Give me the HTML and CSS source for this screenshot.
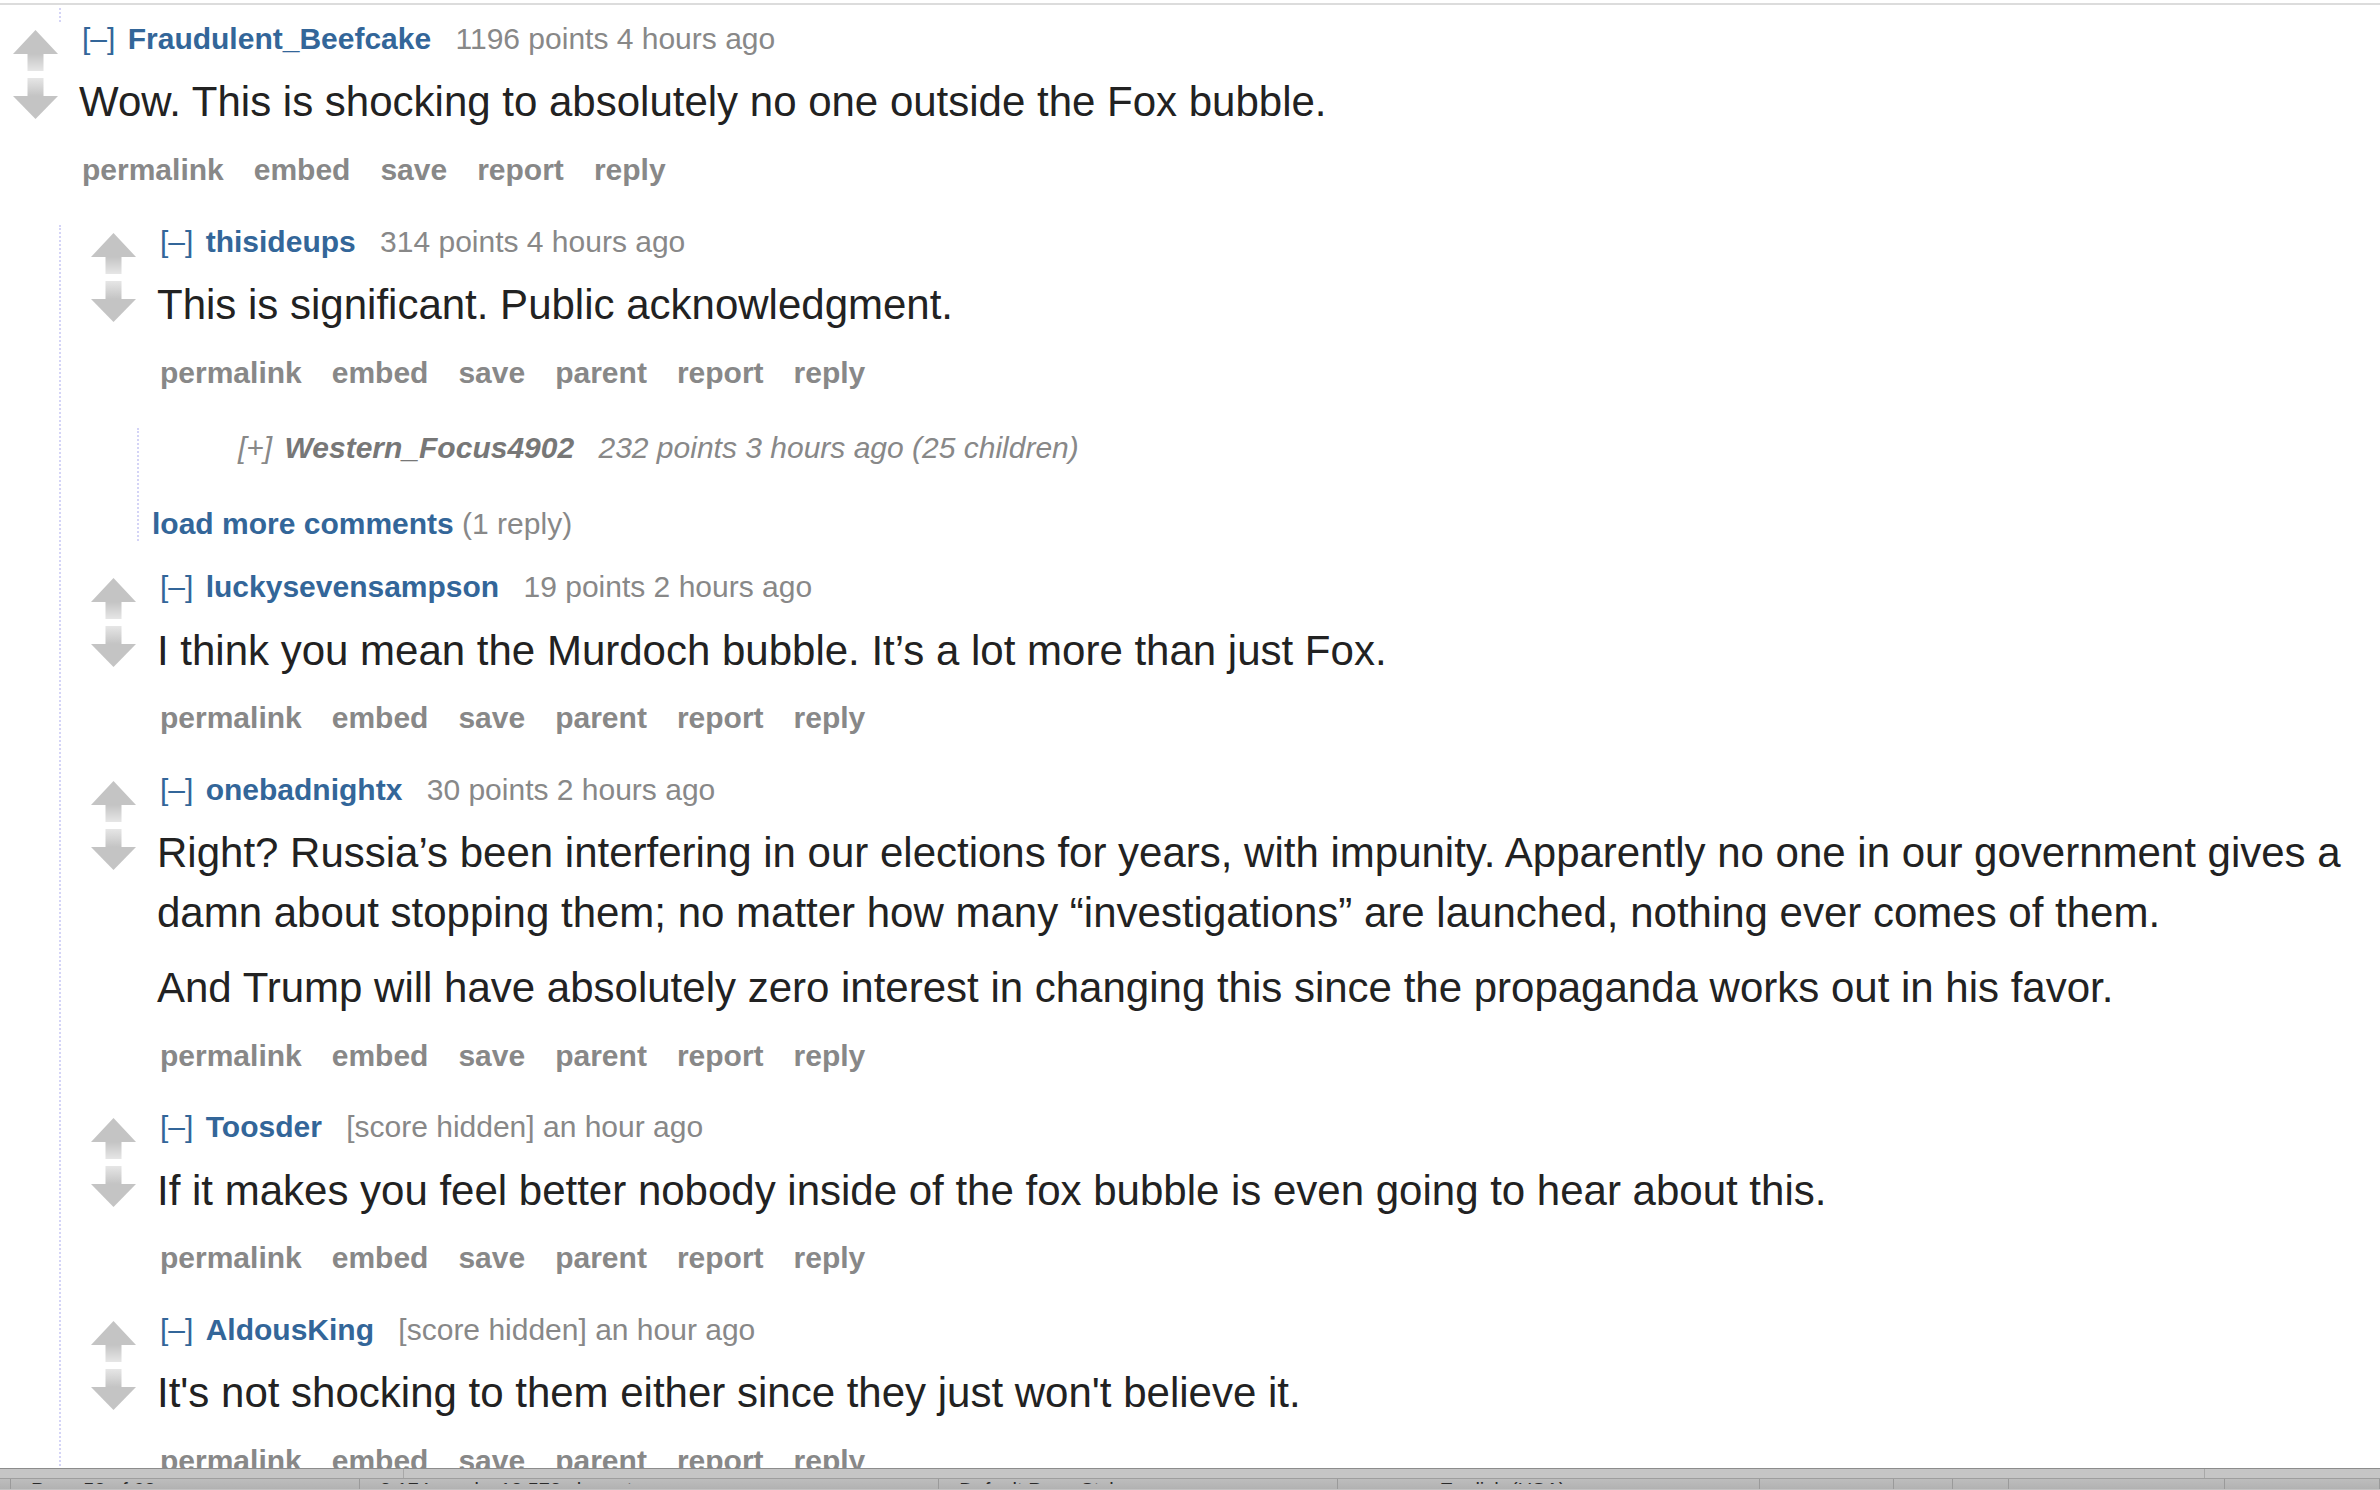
FILE: index.html
```html
<!DOCTYPE html>
<html lang="en">
<head>
<meta charset="utf-8">
<title>comments</title>
<link rel="stylesheet" href="styles.css">
</head>
<body>
<svg class="defs" width="0" height="0" aria-hidden="true">
  <defs>
    <linearGradient id="gup" x1="0" y1="0" x2="0" y2="1">
      <stop offset="0" stop-color="#c4c4c4"/>
      <stop offset="1" stop-color="#e6e6e6"/>
    </linearGradient>
    <linearGradient id="gdown" x1="0" y1="0" x2="0" y2="1">
      <stop offset="0" stop-color="#e6e6e6"/>
      <stop offset="1" stop-color="#c4c4c4"/>
    </linearGradient>
    <symbol id="up" viewBox="0 0 45 41">
      <polygon points="22.5,0 45,24 0,24" fill="#c4c4c4"/>
      <rect x="14.5" y="24" width="16" height="17" fill="url(#gup)"/>
    </symbol>
    <symbol id="down" viewBox="0 0 45 41">
      <rect x="14.5" y="0" width="16" height="18" fill="url(#gdown)"/>
      <polygon points="0,18 45,18 22.5,41" fill="#c4c4c4"/>
    </symbol>
  </defs>
</svg>

<div class="rule"></div>
<div class="prev-thread"></div>

<div class="comment">
  <div class="row">
    <div class="midcol"><svg class="arrow"><use href="#up"/></svg><svg class="arrow"><use href="#down"/></svg></div>
    <div class="entry">
      <p class="tagline"><a class="expand">[–]</a> <a class="author">Fraudulent_Beefcake</a> <span class="score">1196 points 4 hours ago</span></p>
      <div class="md"><p>Wow. This is shocking to absolutely no one outside the Fox bubble.</p></div>
      <ul class="buttons"><li>permalink</li><li>embed</li><li>save</li><li>report</li><li>reply</li></ul>
    </div>
  </div>

  <div class="child">
    <div class="comment">
      <div class="row">
        <div class="midcol"><svg class="arrow"><use href="#up"/></svg><svg class="arrow"><use href="#down"/></svg></div>
        <div class="entry">
          <p class="tagline"><a class="expand">[–]</a> <a class="author">thisideups</a> <span class="score">314 points 4 hours ago</span></p>
          <div class="md"><p>This is significant. Public acknowledgment.</p></div>
          <ul class="buttons"><li>permalink</li><li>embed</li><li>save</li><li>parent</li><li>report</li><li>reply</li></ul>
        </div>
      </div>
      <div class="child inner">
        <div class="comment collapsed">
          <div class="row">
            <div class="midcol"></div>
            <div class="entry">
              <p class="tagline"><a class="expand">[+]</a> <a class="author">Western_Focus4902</a> <span class="score">232 points 3 hours ago (25 children)</span></p>
            </div>
          </div>
        </div>
        <div class="morechildren"><a class="more">load more comments</a> <span class="gray">(1 reply)</span></div>
      </div>
    </div>

    <div class="comment">
      <div class="row">
        <div class="midcol"><svg class="arrow"><use href="#up"/></svg><svg class="arrow"><use href="#down"/></svg></div>
        <div class="entry">
          <p class="tagline"><a class="expand">[–]</a> <a class="author">luckysevensampson</a> <span class="score">19 points 2 hours ago</span></p>
          <div class="md"><p>I think you mean the Murdoch bubble. It’s a lot more than just Fox.</p></div>
          <ul class="buttons"><li>permalink</li><li>embed</li><li>save</li><li>parent</li><li>report</li><li>reply</li></ul>
        </div>
      </div>
    </div>

    <div class="comment">
      <div class="row">
        <div class="midcol"><svg class="arrow"><use href="#up"/></svg><svg class="arrow"><use href="#down"/></svg></div>
        <div class="entry">
          <p class="tagline"><a class="expand">[–]</a> <a class="author">onebadnightx</a> <span class="score">30 points 2 hours ago</span></p>
          <div class="md"><p>Right? Russia’s been interfering in our elections for years, with impunity. Apparently no one in our government gives a damn about stopping them; no matter how many “investigations” are launched, nothing ever comes of them.</p><p>And Trump will have absolutely zero interest in changing this since the propaganda works out in his favor.</p></div>
          <ul class="buttons"><li>permalink</li><li>embed</li><li>save</li><li>parent</li><li>report</li><li>reply</li></ul>
        </div>
      </div>
    </div>

    <div class="comment">
      <div class="row">
        <div class="midcol"><svg class="arrow"><use href="#up"/></svg><svg class="arrow"><use href="#down"/></svg></div>
        <div class="entry">
          <p class="tagline"><a class="expand">[–]</a> <a class="author">Toosder</a> <span class="score">[score hidden] an hour ago</span></p>
          <div class="md"><p>If it makes you feel better nobody inside of the fox bubble is even going to hear about this.</p></div>
          <ul class="buttons"><li>permalink</li><li>embed</li><li>save</li><li>parent</li><li>report</li><li>reply</li></ul>
        </div>
      </div>
    </div>

    <div class="comment">
      <div class="row">
        <div class="midcol"><svg class="arrow"><use href="#up"/></svg><svg class="arrow"><use href="#down"/></svg></div>
        <div class="entry">
          <p class="tagline"><a class="expand">[–]</a> <a class="author">AldousKing</a> <span class="score">[score hidden] an hour ago</span></p>
          <div class="md"><p>It's not shocking to them either since they just won't believe it.</p></div>
          <ul class="buttons"><li>permalink</li><li>embed</li><li>save</li><li>parent</li><li>report</li><li>reply</li></ul>
        </div>
      </div>
    </div>
  </div>
</div>

<div class="statusbar">
  <div class="sb-upper">
    <div class="sb-u1"></div>
    <div class="sb-u2"></div>
    <div class="sb-u3"></div>
  </div>
  <div class="sb-lower">
    <div class="cell c0"></div>
    <div class="cell c1"><span class="clip">Page 52 of 62</span></div>
    <div class="cell c2"><span class="clip">2,174 words, 12,573 characters</span></div>
    <div class="cell c3"><span class="clip">Default Page Style</span></div>
    <div class="cell c4"><span class="clip">English (USA)</span></div>
    <div class="cell c5"></div>
    <div class="cell c6"><span class="clip">▪</span></div>
    <div class="cell c7"></div>
    <div class="cell c8"></div>
    <div class="cell c9"><span class="clip">▣ ▤ ▥</span></div>
    <div class="cell c10"></div>
  </div>
</div>
</body>
</html>
```

FILE: styles.css
```css
html { overflow: hidden; }
body {
  margin: 0;
  background: #fff;
  font-family: "Liberation Sans", Arial, sans-serif;
  color: #222;
}
.defs { position: absolute; width: 0; height: 0; }

.rule {
  margin-top: 3px;
  height: 2px;
  background: #dcdcdc;
}
.prev-thread {
  margin-top: 3px;
  margin-left: 59px;
  height: 13.5px;
  border-left: 2px dotted #d4d4f6;
}

.comment { display: flex; flex-direction: column; }
.row { display: flex; align-items: flex-start; }
.midcol {
  margin-left: 13px;
  width: 45px;
  flex-shrink: 0;
  padding-top: 8px;
  display: flex;
  flex-direction: column;
  gap: 7px;
}
.arrow { width: 45px; height: 41px; display: block; }
.entry {
  margin-left: 21px;
  padding-right: 20px;
  padding-bottom: 8px;
  flex: 1;
  min-width: 0;
}

.tagline {
  margin: 0;
  padding-left: 3px;
  font-size: 30px;
  line-height: 34px;
  color: #888;
  white-space: nowrap;
}
.expand { color: #369; margin-right: 4px; }
.author { color: #369; font-weight: bold; margin-right: 16px; }
.score { color: #888; }

.md { margin-top: 16.5px; }
.md p {
  margin: 0;
  font-size: 42px;
  line-height: 60px;
  color: #222;
}
.md p + p { margin-top: 15px; }

.buttons {
  list-style: none;
  margin: 20.5px 0 0;
  padding: 0 0 0 3px;
  display: flex;
  gap: 30px;
  font-size: 30px;
  line-height: 34px;
  font-weight: bold;
  color: #888;
}

.child {
  margin-top: 30px;
  margin-left: 59px;
  border-left: 2px dotted #d4d4f6;
  padding-left: 17px;
  display: flex;
  flex-direction: column;
  gap: 29.5px;
}
.child.inner { padding-top: 3px; padding-bottom: 0; }

.collapsed .tagline,
.collapsed .tagline a { color: #888; font-style: italic; }
.collapsed .tagline .author { color: #777; }
.collapsed .midcol { padding-top: 0; }

.morechildren {
  margin-left: -4px;
  font-size: 30px;
  line-height: 34px;
  margin-top: 4.5px;
}
.more { color: #369; font-weight: bold; }
.gray { color: #888; }

.statusbar {
  position: fixed;
  left: 0;
  right: 0;
  bottom: 0;
  height: 21px;
  border-top: 1px solid #8c8c8c;
  background: #c2c2c2;
}
.sb-upper {
  display: flex;
  height: 9px;
  border-bottom: 1px solid #9e9e9e;
  background: #c5c5c5;
}
.sb-u1 { width: 403px; border-right: 1px solid #a8a8a8; }
.sb-u2 { width: 1800px; border-right: 1px solid #a8a8a8; }
.sb-u3 { flex: 1; }
.sb-lower {
  display: flex;
  height: 10px;
  overflow: hidden;
  background: linear-gradient(#bdbdbd, #b2b2b2);
}
.cell {
  border-right: 1px solid #9a9a9a;
  white-space: nowrap;
  overflow: hidden;
  padding-left: 20px;
  height: 10px;
}
.clip {
  display: block;
  height: 4px;
  overflow: hidden;
  font-size: 20px;
  line-height: 20px;
  color: #2a2a2a;
  margin-top: 1px;
}
.c0 { width: 10px; padding: 0; }
.c1 { width: 330px; }
.c2 { width: 562px; }
.c3 { width: 380px; }
.c4 { width: 321px; padding-left: 102px; }
.c5 { width: 134px; padding: 0; }
.c6 { width: 58px; padding-left: 0; text-align: center; }
.c7 { width: 56px; padding: 0; }
.c8 { width: 216px; padding: 0; }
.c9 { width: 130px; padding-left: 25px; }
.c10 { flex: 1; border-right: none; padding: 0; }
```
